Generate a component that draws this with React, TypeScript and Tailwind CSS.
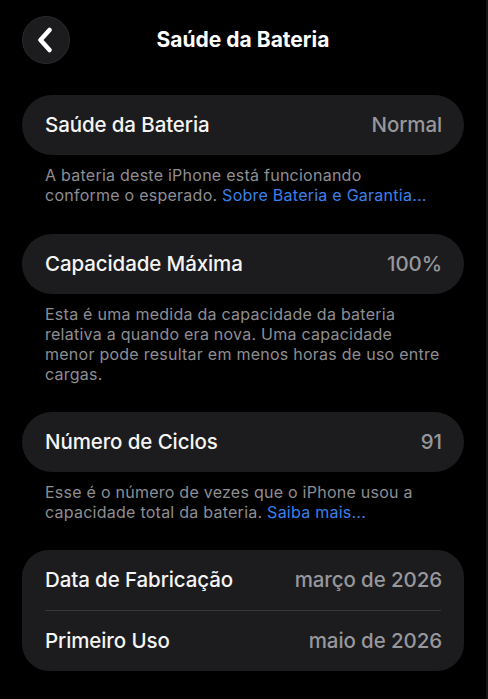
import { ReactNode } from 'react';

const font = { fontFamily: 'Inter, "Noto Sans", sans-serif' };

function Row({ label, value }: { label: string; value: string }) {
  return (
    <div className="flex h-[60px] items-center justify-between pl-[23px] pr-[22px]">
      <span className="text-[20.5px] font-medium tracking-[-0.1px] text-[#f4f4f4]">{label}</span>
      <span className="text-[20.5px] font-medium tracking-[-0.1px] text-[#97979c]">{value}</span>
    </div>
  );
}

function Note({ children }: { children: ReactNode }) {
  return (
    <p className="pl-[23px] pr-[20px] pt-[10px] text-[16px] leading-[20px] tracking-[0.25px] text-[#8e8e93]">
      {children}
    </p>
  );
}

function Link({ children }: { children: ReactNode }) {
  return <span className="text-[#3b80ea]">{children}</span>;
}

export default function App() {
  return (
    <div className="min-h-[699px] w-[488px] border-r-2 border-[#161616] bg-black" style={font}>
      <div className="px-[22px]">
        {/* Header */}
        <div className="relative flex h-[80px] items-center justify-center">
          <button className="absolute left-0 top-[16px] flex h-[48px] w-[48px] items-center justify-center rounded-full border border-[#2a2a2c] bg-[#1c1c1e]">
            <svg width="18" height="26" viewBox="0 0 18 26" fill="none" className="-ml-[2px]">
              <path
                d="M13.5 3 L4.5 13 L13.5 23"
                stroke="#ffffff"
                strokeWidth="4.5"
                strokeLinecap="round"
                strokeLinejoin="round"
              />
            </svg>
          </button>
          <h1 className="text-[21px] font-bold text-white">Saúde da Bateria</h1>
        </div>

        <div className="mt-[15px]">
          <div className="rounded-full bg-[#1c1c1e]">
            <Row label="Saúde da Bateria" value="Normal" />
          </div>
          <Note>
            A bateria deste iPhone está funcionando
            <br />
            conforme o esperado. <Link>Sobre Bateria e Garantia...</Link>
          </Note>
        </div>

        <div className="mt-[29px]">
          <div className="rounded-full bg-[#1c1c1e]">
            <Row label="Capacidade Máxima" value="100%" />
          </div>
          <Note>
            Esta é uma medida da capacidade da bateria
            <br />
            relativa a quando era nova. Uma capacidade
            <br />
            menor pode resultar em menos horas de uso entre
            <br />
            cargas.
          </Note>
        </div>

        <div className="mt-[28px]">
          <div className="rounded-full bg-[#1c1c1e]">
            <Row label="Número de Ciclos" value="91" />
          </div>
          <Note>
            Esse é o número de vezes que o iPhone usou a
            <br />
            capacidade total da bateria. <Link>Saiba mais...</Link>
          </Note>
        </div>

        <div className="mt-[28px] rounded-[27px] bg-[#1c1c1e]">
          <Row label="Data de Fabricação" value="março de 2026" />
          <div className="mx-[23px] h-px bg-[#38383a]" />
          <Row label="Primeiro Uso" value="maio de 2026" />
        </div>
      </div>
    </div>
  );
}
